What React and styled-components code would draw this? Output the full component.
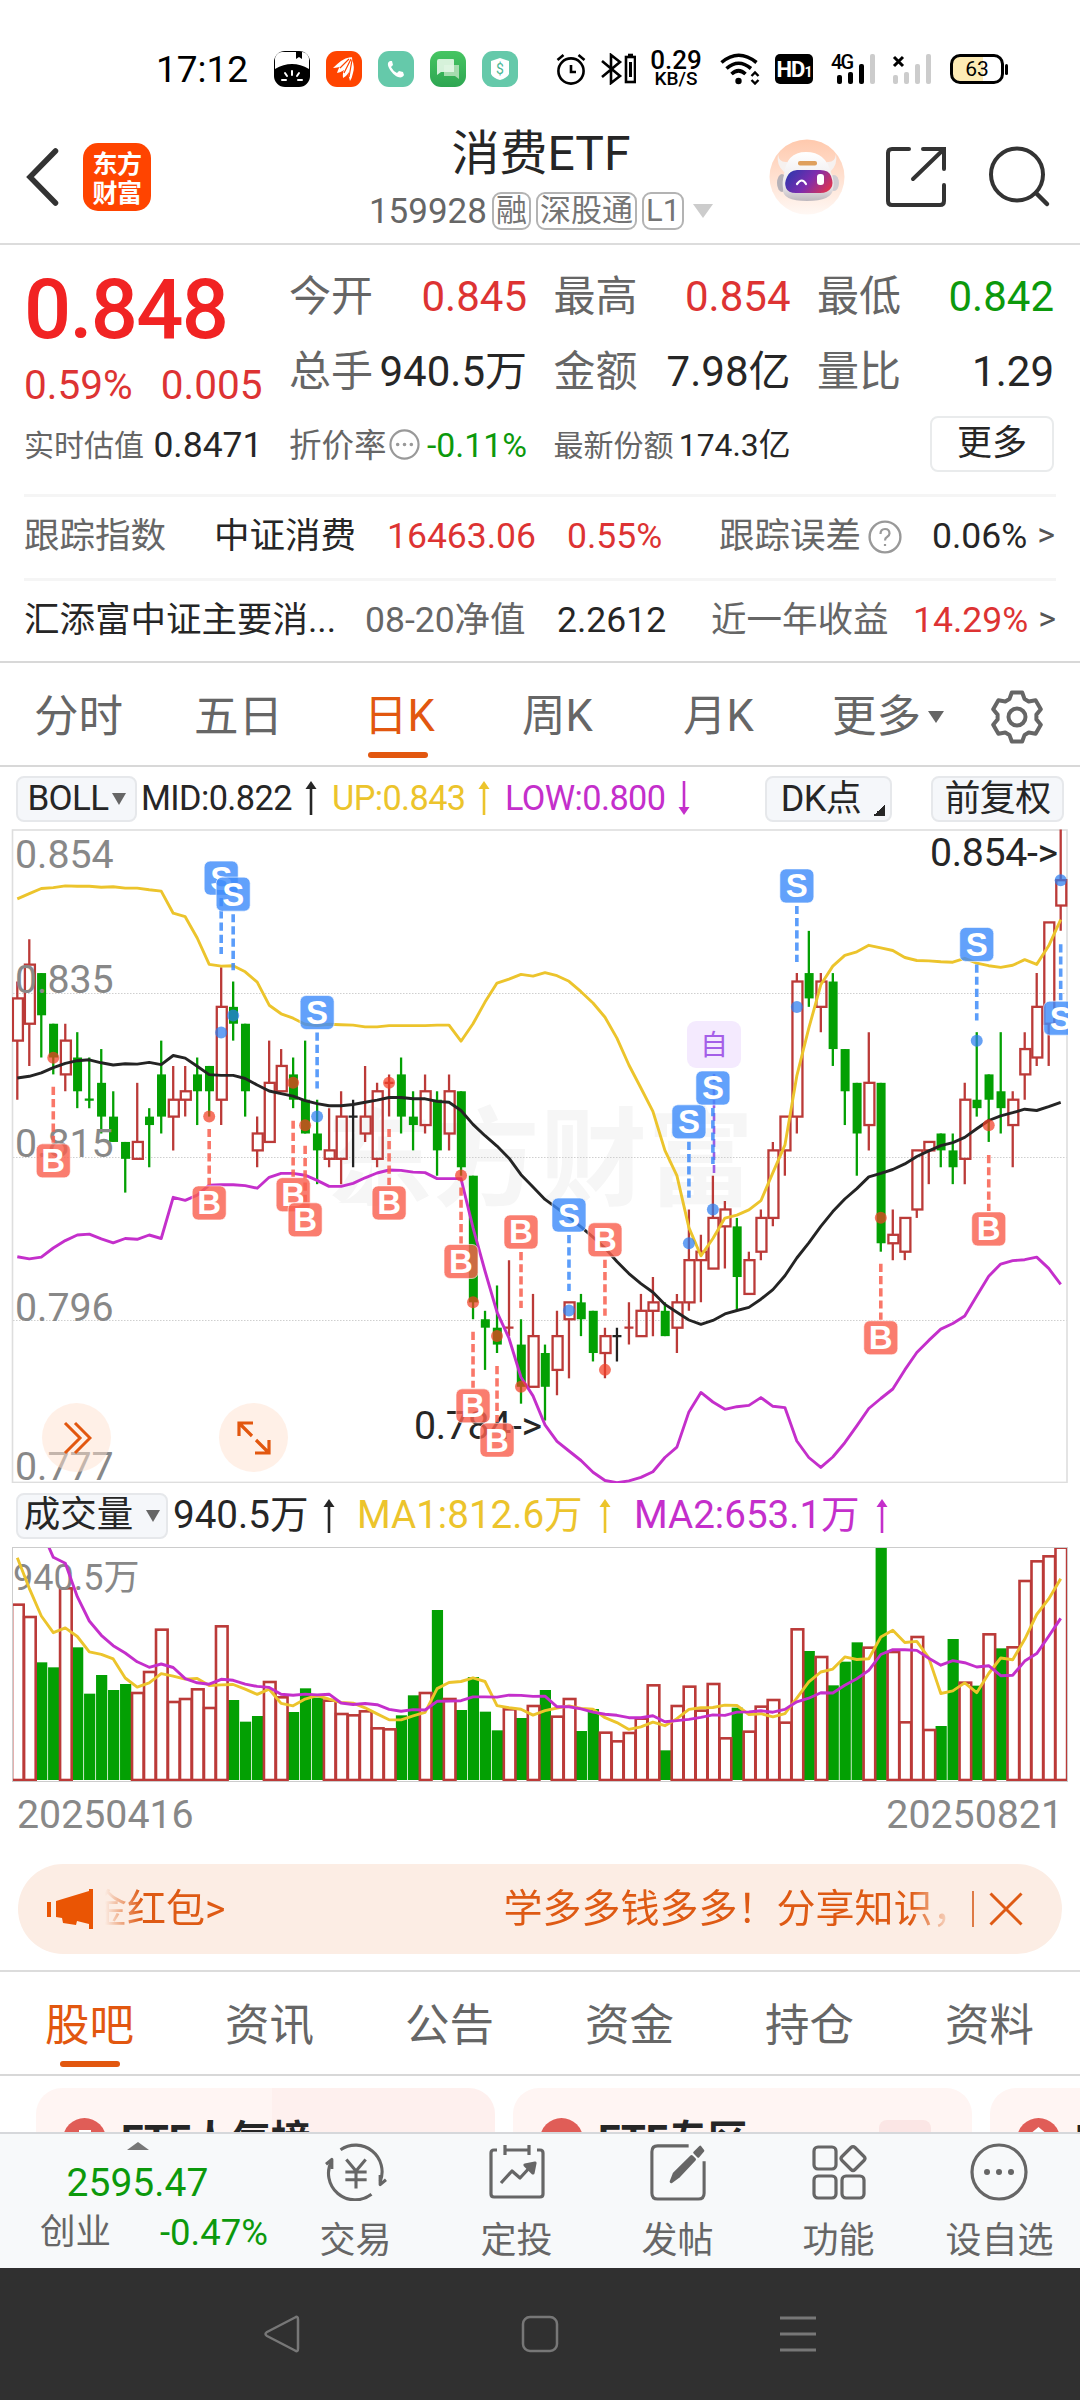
import React from "react";
import styled, { createGlobalStyle, css } from "styled-components";

const RED = "#dd3333";
const GREEN = "#0c990c";
const DARK = "#262626";
const GREY = "#666666";
const ORANGE = "#e2570f";
const YELLOW = "#ecc42c";
const PURPLE = "#c42fcb";
const UP = "#bb3a38";
const DOWN = "#03a003";

const Global = createGlobalStyle`
  * { box-sizing: border-box; }
  body { margin: 0; background: #fff; }
  svg { display: block; flex: none; }
`;

const Screen = styled.div`
  width: 1080px;
  height: 2400px;
  overflow: hidden;
  display: flex;
  flex-direction: column;
  background: #fff;
  color: ${DARK};
  font-family: Roboto, "Noto Sans CJK SC", sans-serif;
  font-size: 36px;
  line-height: 1;
  white-space: nowrap;
`;

const Text = styled.span`
  font-size: ${(p) => p.$size || 36}px;
  color: ${(p) => p.$color || "inherit"};
  line-height: 1;
`;

/* ---------- status bar ---------- */

const StatusBar = styled.div`
  height: 104px;
  padding: 34px 0 0 156px;
  display: flex;
  align-items: center;
  color: #000;
`;

const Clock = styled.span`
  font-size: 37px;
  width: 118px;
`;

const AppIcons = styled.div`
  display: flex;
  gap: 16px;
  width: 298px;
`;

const AppIcon = styled.div`
  width: 36px;
  height: 36px;
  border-radius: 11px;
  overflow: hidden;
  background: ${(p) => p.$bg};
`;

const StatusIcons = styled.div`
  display: flex;
  align-items: center;
  margin-left: -16px;
`;

const Speed = styled.div`
  width: 58px;
  margin: 0 15px 0 11px;
  display: flex;
  flex-direction: column;
  align-items: center;
  font-size: 26px;
  line-height: 19px;
  font-weight: 500;
  small {
    font-size: 19px;
    line-height: 18px;
  }
`;

const HdBadge = styled.div`
  width: 38px;
  height: 30px;
  margin: 0 18px 0 14px;
  border-radius: 5px;
  background: #000;
  color: #fff;
  display: flex;
  align-items: baseline;
  justify-content: center;
  font-size: 22px;
  line-height: 31px;
  font-weight: 700;
  letter-spacing: -1px;
  small { font-size: 14px; }
`;

const Battery = styled.div`
  width: 54px;
  height: 30px;
  margin-left: 18px;
  border: 3px solid #000;
  border-radius: 10px;
  background: linear-gradient(90deg, #fdebb5 62%, #fff 62%);
  font-size: 21px;
  line-height: 25px;
  text-align: center;
`;

const BatteryTip = styled.div`
  width: 3px;
  height: 11px;
  margin-left: 1px;
  border-radius: 2px;
  background: #000;
`;

/* ---------- title bar ---------- */

const TitleBar = styled.header`
  height: 141px;
  padding: 6px 0 0 26px;
  border-bottom: 2px solid #dcdcdc;
  display: flex;
  align-items: center;
`;

const Logo = styled.div`
  width: 68px;
  height: 68px;
  margin-left: 23px;
  border-radius: 15px;
  background: #ff4400;
  color: #fff;
  display: grid;
  place-content: center;
  font: 700 25px/29px "Noto Sans CJK SC", sans-serif;
  letter-spacing: -0.5px;
  text-align: center;
`;

const TitleBlock = styled.div`
  width: 400px;
  margin: 9px 0 0 190px;
  display: flex;
  flex-direction: column;
  align-items: center;
`;

const Title = styled.h1`
  margin: 0;
  font-size: 48px;
  font-weight: 400;
  line-height: 60px;
`;

const SubTitle = styled.div`
  height: 55px;
  display: flex;
  align-items: center;
  gap: 5px;
  color: ${GREY};
`;

const Tag = styled.span`
  height: 38px;
  padding: 0 2px;
  border: 2px solid #b3b3b3;
  border-radius: 9px;
  color: #757575;
  font-size: 31px;
  line-height: 34px;
`;

const Triangle = styled.i`
  width: 0;
  height: 0;
  margin-left: ${(p) => p.$ml || 0}px;
  border: ${(p) => p.$w}px solid transparent;
  border-bottom-width: 0;
  border-top: ${(p) => p.$h}px solid ${(p) => p.$color};
  ${(p) => p.$up && css`transform: rotate(180deg);`}
`;

const HeaderIcons = styled.div`
  display: flex;
  align-items: center;
  gap: 38px;
  margin-left: 28px;
`;

/* ---------- quote panel ---------- */

const Quote = styled.section`
  height: 418px;
  padding: 14px 24px 0;
  border-bottom: 2px solid #d8d8d8;
`;

const QuoteTop = styled.div`
  display: grid;
  grid-template-columns: 238.5px 238px 237px 237px;
  column-gap: 26.5px;
  grid-template-rows: 75px 75px 74px;
  height: 235px;
`;

const PriceBlock = styled.div`
  grid-row: span 2;
  padding-top: 8px;
`;

const Price = styled.div`
  font-size: 83px;
  font-weight: 500;
  line-height: 86px;
  letter-spacing: -1.7px;
  color: #f12323;
`;

const Change = styled.div`
  display: flex;
  justify-content: space-between;
  height: 64px;
  align-items: center;
  font-size: 40.5px;
  color: ${RED};
`;

const Cell = styled.div`
  display: flex;
  align-items: center;
  justify-content: space-between;
  font-size: ${(p) => p.$size || 42}px;
  color: ${(p) => p.$color || DARK};
`;

const MoreButton = styled.button`
  justify-self: end;
  align-self: center;
  width: 124px;
  height: 56px;
  margin: -4px 0 0;
  padding: 0;
  border: 2px solid #e9ebec;
  border-radius: 8px;
  background: #fff;
  color: ${DARK};
  font: 35px/52px Roboto, "Noto Sans CJK SC", sans-serif;
`;

const QuoteRow = styled.div`
  height: 84px;
  border-top: 3px solid #f5f5f5;
  display: grid;
  grid-template-columns: ${(p) => p.$cols};
  align-items: center;
  font-size: 35.5px;
  padding-bottom: 2px;
`;

const Inline = styled.span`
  display: flex;
  align-items: center;
  gap: ${(p) => p.$gap || 0}px;
`;

const Raised = styled.span`
  padding-bottom: 4px;
`;

/* ---------- tabs ---------- */

const Tabs = styled.nav`
  height: 104px;
  border-bottom: 2px solid #d8d8d8;
  border-top: ${(p) => p.$line || 0}px solid #dcdcdc;
  flex: none;
  display: grid;
  grid-template-columns: ${(p) => p.$cols};
  padding-left: ${(p) => p.$pl}px;
`;

const Tab = styled.div`
  position: relative;
  height: 100%;
  display: flex;
  align-items: center;
  padding-top: 6px;
  font-size: ${(p) => p.$size || 44.5}px;
  color: ${(p) => (p.$active ? ORANGE : GREY)};
  ${(p) =>
    p.$active &&
    css`
      &::after {
        content: "";
        position: absolute;
        left: ${p.$bar}px;
        bottom: 7px;
        width: 60px;
        height: 6px;
        border-radius: 3px;
        background: ${ORANGE};
      }
    `}
`;

/* ---------- chart legend rows ---------- */

const Legend = styled.div`
  height: ${(p) => p.$h}px;
  padding: 1px 16px 0;
  display: flex;
  align-items: center;
  font-size: ${(p) => p.$size}px;
  letter-spacing: ${(p) => p.$track || 0}px;
`;

const Chip = styled.div`
  width: ${(p) => p.$w}px;
  height: 46px;
  margin-right: ${(p) => p.$mr || 0}px;
  margin-left: ${(p) => (p.$push ? "auto" : 0)};
  border: 2px solid #e6e8eb;
  border-radius: 8px;
  background: #f5f7fa;
  display: flex;
  align-items: center;
  justify-content: center;
  font-size: ${(p) => p.$size || 36}px;
`;

const Corner = styled.i`
  width: 12px;
  height: 12px;
  margin: 22px -9px 0 12px;
  background: linear-gradient(135deg, transparent 50%, ${DARK} 50%);
`;

const Reading = styled.div`
  width: ${(p) => p.$w}px;
  display: flex;
  align-items: center;
  justify-content: space-between;
  color: ${(p) => p.$color};
  margin-right: ${(p) => p.$mr || 0}px;
`;

const ChartBox = styled.div`
  position: relative;
  height: ${(p) => p.$h}px;
`;

const RoundButton = styled.div`
  position: absolute;
  left: ${(p) => p.$x}px;
  top: 574px;
  width: 69px;
  height: 69px;
  border-radius: 50%;
  background: rgba(255, 225, 208, 0.5);
  display: grid;
  place-items: center;
`;

const Dates = styled.div`
  height: 82px;
  padding: 0 17px 15px 17px;
  display: flex;
  align-items: center;
  justify-content: space-between;
  color: #888;
  font-size: 39.3px;
`;

/* ---------- notice ---------- */

const Notice = styled.div`
  height: 90px;
  margin: 0 18px 16px;
  padding: 0 36px 0 29px;
  border-radius: 45px;
  background: #fcede4;
  color: #de5a14;
  display: flex;
  align-items: center;
`;

const Marquee = styled.div`
  width: 854px;
  height: 60px;
  margin-left: 12px;
  overflow: hidden;
  display: flex;
  align-items: center;
  font-size: 39px;
  flex: none;
  mask-image: linear-gradient(90deg, transparent, #000 36px, #000 806px, transparent 850px);
`;

const MarqueeItem = styled.span`
  margin-left: ${(p) => p.$ml}px;
`;

const NoticeRule = styled.i`
  width: 2px;
  height: 36px;
  margin: 0 15px 0 13px;
  background: #de7a45;
  flex: none;
`;

/* ---------- cards ---------- */

const Cards = styled.div`
  height: 56px;
  overflow: hidden;
  padding: 12px 0 0 36px;
  display: flex;
  gap: 18px;
`;

const Card = styled.div`
  flex: none;
  width: 459px;
  height: 120px;
  border-radius: 26px;
  padding: 30px 0 0 27px;
  background: ${(p) => p.$bg || "#fff5f3"};
  display: flex;
  align-items: flex-start;
  overflow: hidden;
`;

const CardTitle = styled.span`
  margin-left: 15px;
  font-size: 40px;
  font-weight: 700;
  line-height: 46px;
`;

const CardArrow = styled.span`
  margin-left: 14px;
  color: #888;
  font-size: 26px;
  line-height: 44px;
`;

const CardBlock = styled.i`
  width: 52px;
  height: 50px;
  margin: 2px 0 0 104px;
  border-radius: 8px;
  background: #fbe6e5;
`;

/* ---------- bottom bars ---------- */

const Toolbar = styled.footer`
  height: 136px;
  border-top: 2px solid #d6d8db;
  background: #f7f9fa;
  display: grid;
  grid-template-columns: 275px repeat(5, 161px);
`;

const IndexBox = styled.div`
  display: flex;
  flex-direction: column;
  align-items: center;
  padding-top: 8px;
  color: ${GREEN};
`;

const IndexValue = styled.div`
  margin: 14px 0 6px;
  font-size: 39px;
  line-height: 39px;
`;

const IndexLine = styled.div`
  width: 228px;
  height: 48px;
  margin-left: 33px;
  display: flex;
  align-items: center;
  justify-content: space-between;
  font-size: 36.5px;
`;

const ToolItem = styled.div`
  display: flex;
  flex-direction: column;
  align-items: center;
  padding-top: 9px;
  color: ${GREY};
  font-size: 36px;
  line-height: 42px;
  gap: 19px;
`;

const SystemNav = styled.div`
  height: 132px;
  background: #303030;
  display: flex;
  justify-content: space-between;
  align-items: center;
  padding: 0 263px;
`;

/* ---------- data ---------- */

/* Distance below 0.854 in thousandths: [kind, high, top, bottom, low] */
const CANDLES = `r18,20,25,32 r13,16,23,28 g17,17,22,27 g23,23,27,29 r23,25,29,31 g24,27,31,33 g27,32,32,33
g26,30,34,36 g31,34,37,37 g37,37,39,43 r30,37,39,39 g33,34,35,40 g25,29,34,36 r28,32,34,38 r28,31,32,34
g27,29,31,35 g28,28,31,34 r16.3,21,32,35 g18,21,23,25 g23,23,31,34 r34,36,38,40 r25,30,37,37 r26,28,31,31
g27,29,32,33 g25,32,36,36 g32,36,38,42 r33,38,39,40 r31,34,39,42 k32,34,34,40 r28,34,36,37 r30,31,39,40
r29,30,30,34 g27,29,34,36 g31,34,35,38 r29,31,35,36 g31,32,38,41 r29,31,36,38 g31,31,40,41 g41,41,56,58
g57,58,59,64 g54,59,61,62 r51,59,59,60 g58,61,66,68 r55,60,66,66 g61,62,66,70 r57,60,64,67 r56,56,58,65
g55,56,58,60 g57,57,62,63 r59,60,62,65 k59,60,60,63 r56,59,59,61 r55,57,60,60 r53,56,57,60 g56,57,60,60
r55,56,59,62 r45,51,56,57 r48,50,51,56 r41,46,52,52 r44,45,47,52 g46,47,53,57 r50,51,55,55 r45,46,50,51
r37,38,46,47 r34,34,38,41 r17,18,34,36 g12,17,20,21 r17,18,21,24 g17,18,26,28 g26,26,31,35 g30,30,36,41
r24,30,35,38 g30,30,49,50 r45,48,49,51 r46,46,50,51 r38,38,45,46 r37,37,38,42 g36,36,38,40 g36,38,40,42
r30,32,39,42 g24,32,33,34 g29,29,32,37 g24,31,33,36 r31,32,35,40 r24,26,29,32 r17,21,27,28 r11,11,23,28
r0,6,9,12`
  .split(/\s+/)
  .map((s) => ({ kind: s[0], v: s.slice(1).split(",").map(Number) }));

const BOLL_UP = [
  182, 170, 158, 156, 152, 153, 153, 155, 154, 157, 157, 161, 164, 215, 223, 272, 333, 337, 336, 350, 374, 427,
  447, 457, 471, 474, 471, 472, 473, 477, 477, 474, 474, 474, 474, 473, 473, 510, 470, 420, 376, 367, 356, 360,
  352, 359, 372, 396, 422, 455, 503, 565, 618, 672, 762, 820, 940, 1005, 965, 918, 911, 899, 878, 813, 750, 590,
  480, 380, 337, 312, 304, 289, 295, 301, 317, 324, 325, 327, 328, 319, 330, 336, 340, 335, 322, 333, 290, 230,
];
const BOLL_MID = [
  595, 591, 583, 571, 561, 555, 553, 560, 565, 562, 563, 559, 564, 543, 549, 568, 587, 589, 589, 596, 611, 625,
  631, 637, 647, 654, 659, 659, 656, 651, 646, 640, 640, 643, 643, 649, 651, 670, 702, 728, 752, 780, 818, 846,
  875, 895, 916, 938, 962, 987, 1018, 1046, 1069, 1089, 1117, 1135, 1153, 1163, 1154, 1139, 1131, 1124, 1105,
  1083, 1051, 1010, 975, 937, 903, 874, 850, 823, 815, 806, 793, 776, 763, 751, 744, 732, 712, 693, 682, 675,
  667, 670, 661, 651,
];
const BOLL_LOW = [
  1007, 1012, 1008, 987, 970, 957, 955, 966, 975, 965, 967, 957, 965, 870, 877, 865, 842, 841, 841, 843, 849, 824,
  815, 815, 819, 831, 845, 845, 838, 825, 814, 807, 808, 812, 813, 827, 827, 827, 940, 1040, 1135, 1195, 1285,
  1328, 1395, 1433, 1455, 1477, 1504, 1523, 1528, 1524, 1516, 1503, 1470, 1446, 1365, 1320, 1342, 1359, 1353,
  1350, 1332, 1352, 1355, 1432, 1470, 1493, 1469, 1436, 1397, 1357, 1334, 1312, 1268, 1228, 1200, 1174, 1161,
  1144, 1098, 1052, 1024, 1016, 1014, 1008, 1034, 1071,
];

/* [candle index, letter, badge position, dot position, badge side] */
const MARKS = [
  [3, "B", 786, 548, "below"],
  [16, "B", 883, 684, "below"],
  [17, "S", 134, 490, "above"],
  [18, "S", 171, 451, "above"],
  [23, "B", 864, 606, "below"],
  [24, "B", 922, 704, "below"],
  [25, "S", 444, 684, "above"],
  [31, "B", 883, 606, "below"],
  [37, "B", 1018, 820, "below"],
  [38, "B", 1351, 1112, "below"],
  [40, "B", 1430, 1190, "below"],
  [42, "B", 950, 1307, "above"],
  [46, "S", 911, 1131, "above"],
  [49, "B", 968, 1268, "above"],
  [56, "S", 696, 976, "above"],
  [58, "S", 618, 898, "above"],
  [65, "S", 152, 431, "above"],
  [72, "B", 1194, 917, "below"],
  [80, "S", 287, 509, "above"],
  [81, "B", 943, 704, "below"],
  [87, "S", 457, 139, "below"],
];

const VOLUMES = [
  526, 489, 353, 338, 575, 398, 259, 315, 270, 288, 261, 324, 451, 234, 243, 272, 216, 461, 240, 175, 192, 294,
  248, 204, 275, 247, 238, 198, 194, 206, 155, 152, 194, 254, 261, 510, 243, 210, 309, 205, 149, 212, 186, 222,
  270, 190, 243, 147, 213, 142, 116, 141, 184, 284, 89, 222, 280, 208, 288, 125, 217, 145, 220, 240, 172, 452,
  387, 369, 284, 355, 413, 397, 696, 384, 173, 429, 150, 162, 423, 292, 283, 437, 395, 398, 597, 656, 671, 697,
];

const VOLUME_DOWN = new Set([
  2, 3, 5, 6, 7, 8, 9, 18, 19, 20, 23, 24, 25, 32, 33, 35, 37, 38, 39, 40, 42, 44, 47, 48, 54, 60, 66, 68, 69, 70,
  72, 77, 78, 80, 82,
]);

const STEP = 11.993;
const px = (i) => 17.3 + i * STEP;
const scaleY = (v) => v / 2.306 - 9;
const priceY = (d) => scaleY(22 + d * 19.47);
const volY = (v) => (900 - v) / 3 - 67;
const curveY = (v) => volY(v);
const line = (values, y) => values.map((v, i) => `${px(i).toFixed(1)},${y(v).toFixed(1)}`).join(" ");

const average = (span, lead) =>
  VOLUMES.map((_, i) =>
    i < span - 1 ? lead[i] : VOLUMES.slice(i - span + 1, i + 1).reduce((a, b) => a + b, 0) / span
  );
const MA1 = average(5, [667, 575, 492, 442]);
const MA2 = average(10, [900, 830, 750, 668, 650, 550, 477, 434, 403]);

/* ---------- drawings ---------- */

const Candle = ({ i, kind, v }) => {
  const [high, top, bottom, low] = v.map(priceY);
  const x = px(i);
  if (kind === "k" || bottom === top) {
    const color = kind === "k" ? "#222" : kind === "r" ? UP : DOWN;
    return <path d={`M${x} ${high}V${low}M${x - 4.5} ${top}H${x + 4.5}`} stroke={color} strokeWidth="2.3" />;
  }
  if (kind === "g")
    return (
      <g>
        <path d={`M${x} ${high}V${low}`} stroke={DOWN} strokeWidth="2.3" />
        <rect x={x - 4.2} y={top} width="9" height={bottom - top} fill={DOWN} />
      </g>
    );
  return (
    <g stroke={UP} strokeWidth="2.3" fill="none">
      <path d={`M${x} ${high}V${top}M${x} ${bottom}V${low}`} />
      <rect x={x - 4.4} y={top} width="10" height={bottom - top} />
    </g>
  );
};

const Mark = ({ i, letter, badge, dot, side }) => {
  const x = px(i);
  const y = scaleY(badge);
  const color = letter === "S" ? "#3f8cfa" : "#f9604f";
  const start = side === "above" ? y + 20 : y - 74;
  return (
    <g>
      <path d={`M${x} ${start}V${start + 56}`} stroke={color} strokeWidth="3.6" strokeDasharray="8.2 4" opacity="0.85" />
      <circle cx={x} cy={scaleY(dot)} r="6" fill={letter === "S" ? "#2b7df0" : "#f23f26"} opacity="0.72" />
      <rect x={x - 17} y={y - 17} width="34" height="34" rx="6" fill={color} fillOpacity="0.82" stroke="#fff" strokeOpacity="0.6" />
      <text x={x} y={y + 11.5} textAnchor="middle" fill="#fff" fontFamily="Liberation Sans, sans-serif" fontWeight="700" fontSize="33">
        {letter}
      </text>
    </g>
  );
};

const AXIS = [
  ["0.854", 38.5],
  ["0.835", 164],
  ["0.815", 327.5],
  ["0.796", 491.5],
  ["0.777", 651],
];

const PriceChart = () => (
  <svg width="1080" height="654" fontFamily="Roboto, 'Noto Sans CJK SC', sans-serif" fontSize="39.3">
    <defs>
      <clipPath id="plot">
        <rect x="12" y="0" width="1056" height="654" />
      </clipPath>
    </defs>
    <path d="M338 374Q366 366 372 334V374Z" fill="#f6f6f6" />
    <text x="326" y="368" fontSize="107" fontWeight="700" fill="#f6f6f6">东方财富</text>
    {[400, 777, 1154].map((v) => (
      <path key={v} d={`M13 ${Math.round(scaleY(v)) + 0.5}H1067`} stroke="#cfcfcf" strokeDasharray="1.5 1.5" />
    ))}
    <rect x="12.5" y="1" width="1054.5" height="652.4" fill="none" stroke="#dedede" strokeWidth="1.6" />
    <g clipPath="url(#plot)">
      {CANDLES.map((c, i) => (
        <Candle key={i} i={i} {...c} />
      ))}
      {AXIS.map(([t, y]) => (
        <text key={t} x="15" y={y} fill="#888">{t}</text>
      ))}
      <text x="930" y="36.5" fill={DARK} textLength="128">0.854-&gt;</text>
      <text x="414" y="609.5" fill={DARK} textLength="128">0.784-&gt;</text>
      <g fill="none" strokeWidth="2.9" strokeLinejoin="round">
        <polyline points={line(BOLL_UP, scaleY)} stroke={YELLOW} />
        <polyline points={line(BOLL_LOW, scaleY)} stroke={PURPLE} />
        <polyline points={line(BOLL_MID, scaleY)} stroke="#242424" />
      </g>
      <path d="M714 245V347" stroke="#9b5de5" strokeWidth="2.6" strokeDasharray="8 5" />
      <rect x="687" y="192" width="54" height="47" rx="9" fill="#f4eafe" />
      <text x="714" y="226" textAnchor="middle" fill="#a45fe8" fontSize="28">自</text>
      {MARKS.map(([i, letter, badge, dot, side]) => (
        <Mark key={i} i={i} letter={letter} badge={badge} dot={dot} side={side} />
      ))}
    </g>
  </svg>
);

const VolumeChart = () => (
  <svg width="1080" height="235" fontFamily="Roboto, 'Noto Sans CJK SC', sans-serif" fontSize="36">
    <defs>
      <clipPath id="volume">
        <rect x="12" y="0" width="1056" height="235" />
      </clipPath>
    </defs>
    <g clipPath="url(#volume)">
      {VOLUMES.map((v, i) =>
        VOLUME_DOWN.has(i) ? (
          <rect key={i} x={px(i) - 5.2} y={volY(v)} width="11.2" height={v / 3} fill={DOWN} />
        ) : null
      )}
      {VOLUMES.map((v, i) =>
        VOLUME_DOWN.has(i) ? null : (
          <rect key={i} x={px(i) - 5.2} y={volY(v)} width="11.6" height={v / 3} fill="#fff" stroke={UP} strokeWidth="2.6" />
        )
      )}
      <text x="13" y="42.5" fill="#888">940.5万</text>
      <g fill="none" strokeWidth="2.9" strokeLinejoin="round">
        <polyline points={line(MA1, curveY)} stroke={YELLOW} />
        <polyline points={line(MA2, curveY)} stroke={PURPLE} />
      </g>
    </g>
    <rect x="12.5" y="0.5" width="1055" height="234" fill="none" stroke="#cccccc" />
  </svg>
);

const Arrow = ({ color, down }) => (
  <svg width="12" height="34" viewBox="0 0 12 34" transform={down ? "rotate(180)" : undefined}>
    <path d="M6 5V34" stroke={color} strokeWidth="2.6" />
    <path d="M0.5 8L6 0l5.5 8z" fill={color} />
  </svg>
);

const gearPath = () => {
  const pts = [];
  for (let k = 0; k < 6; k++) {
    [[-23, 19.5], [-12, 25], [12, 25], [23, 19.5]].forEach(([off, r]) => {
      const a = ((k * 60 - 90 + off) * Math.PI) / 180;
      pts.push(`${(27 + r * Math.cos(a)).toFixed(1)} ${(27 + r * Math.sin(a)).toFixed(1)}`);
    });
  }
  return `M${pts.join("L")}Z`;
};

const Gear = () => (
  <svg width="54" height="54" fill="none" stroke={GREY} strokeWidth="4" strokeLinejoin="round">
    <path d={gearPath()} />
    <circle cx="27" cy="27" r="8.5" />
  </svg>
);

const HelpDot = ({ size, children }) => (
  <svg width={size} height={size} viewBox="0 0 34 34" fill="none" stroke="#999" strokeWidth="2.4">
    <circle cx="17" cy="17" r="15.4" />
    {children}
  </svg>
);

const Robot = () => (
  <svg width="76" height="76" viewBox="0 0 76 76">
    <defs>
      <linearGradient id="halo" x1="0" y1="0" x2="0" y2="1">
        <stop offset="0" stopColor="#ffc9ad" />
        <stop offset="1" stopColor="#fff8f4" />
      </linearGradient>
      <linearGradient id="visor" x1="0" y1="0.3" x2="1" y2="0.7">
        <stop offset="0" stopColor="#3436ad" />
        <stop offset="0.5" stopColor="#7d2cae" />
        <stop offset="1" stopColor="#dd3450" />
      </linearGradient>
      <linearGradient id="shell" x1="0" y1="0" x2="0" y2="1">
        <stop offset="0" stopColor="#ffffff" />
        <stop offset="0.7" stopColor="#ebe8ea" />
        <stop offset="1" stopColor="#bdb7bd" />
      </linearGradient>
    </defs>
    <circle cx="38" cy="38" r="37.5" fill="url(#halo)" />
    <path d="M9 15q1 9 9 8l5 6-8 4q-8-7-6-18zM67 15q-1 9-9 8l-5 6 8 4q8-7 6-18z" fill="#f6f1ef" />
    <ellipse cx="13" cy="44" rx="5" ry="9" fill="#b5b1b8" />
    <ellipse cx="65" cy="44" rx="5" ry="8" fill="#d0ccd2" />
    <path d="M15 36Q17 13 37 13t25 21q4 8 2 16-1 12-26 12T14 50q-1-8 1-14z" fill="url(#shell)" />
    <rect x="29" y="22" width="19" height="4.5" rx="2" fill="#dfa05d" />
    <path d="M18 38q2-6 10-7h23q9 0 11 6 3 8 0 12-3 5-11 5H27q-8 0-10-5-2-5 1-11z" fill="url(#visor)" />
    <path d="M28 45q5-7 9 0" stroke="#fff" strokeWidth="2.2" fill="none" strokeLinecap="round" />
    <rect x="48" y="35" width="7" height="11" rx="3" fill="#fff" />
  </svg>
);

const Wifi = () => (
  <svg width="41" height="32" viewBox="0 0 41 32" fill="none" stroke="#000" strokeWidth="3.6">
    <path d="M1.5 9.5Q18.5-5 36.5 9.5M6.5 15.5Q18.5 5 31 15.5M11.5 21Q18.5 14.5 25.5 21" />
    <circle cx="18.5" cy="28" r="3.2" fill="#000" stroke="none" />
    <path d="M31.5 23L35 19.5 38.5 23M31.5 27L35 30.5 38.5 27" strokeWidth="2.4" />
  </svg>
);

const SignalBox = styled.div`
  display: flex;
  margin-right: ${(p) => p.$mr || 0}px;
`;

const Signal = ({ label, levels, dim }) => (
  <svg width={label ? 46 : 40} height="32" viewBox={label ? "0 0 46 32" : "0 0 40 32"} overflow="visible">
    {label && (
      <text x="0" y="16" fontSize="20" fontWeight="500" fontFamily="Roboto, sans-serif" textLength="23">
        {label}
      </text>
    )}
    {dim && <path d="M2 4l9 9M11 4l-9 9" stroke="#000" strokeWidth="3" />}
    {levels.map(([x, h, c]) => (
      <rect key={x} x={x} y={31 - h} width="5" height={h} rx="2" fill={c} />
    ))}
  </svg>
);

const toolIcon = { width: 60, height: 58, fill: "none", stroke: GREY, strokeWidth: 3.2, strokeLinejoin: "round" };

const TOOLS = [
  [
    "交易",
    <svg key="t" {...toolIcon} width="66" viewBox="0 0 66 60">
      <path d="M17 7A27.5 27.5 0 0 1 58 40M49 53A27.5 27.5 0 0 1 8 18" />
      <path d="M2 22l6-5v10M64 38l-6 5v-10" />
      <path d="M23 17l10 12 10-12M33 29v18M22 30h22M22 38h22" />
    </svg>,
  ],
  [
    "定投",
    <svg key="t" {...toolIcon} viewBox="0 0 60 58">
      <path d="M10 7H7q-3 0-3 3v41q0 3 3 3h46q3 0 3-3V10q0-3-3-3h-3M18 7h24M18 2v10M42 2v10" />
      <path d="M14 40l11-12 8 7 12-13" />
      <path d="M38 22l10-2-2 10z" fill={GREY} />
    </svg>,
  ],
  [
    "发帖",
    <svg key="t" {...toolIcon} viewBox="0 0 60 60">
      <path d="M41 3H9q-6 0-6 6v43q0 6 6 6h42q6 0 6-6V19" />
      <path d="M53 4l3 4-5 6-4-4z" fill={GREY} strokeWidth="2.5" />
      <path d="M44 14l3 3-17 18-7 5 3-8z" fill={GREY} />
    </svg>,
  ],
  [
    "功能",
    <svg key="t" {...toolIcon} viewBox="0 0 60 58">
      <rect x="5" y="4" width="22" height="22" rx="4" />
      <rect x="5" y="33" width="22" height="22" rx="4" />
      <rect x="33" y="33" width="22" height="22" rx="4" />
      <path d="M42 4.500q2-2 4 0l9 9q2 2 0 4l-9 9q-2 2-4 0l-9-9q-2-2 0-4z" />
    </svg>,
  ],
  [
    "设自选",
    <svg key="t" {...toolIcon} viewBox="0 0 60 58">
      <circle cx="29" cy="29" r="27" />
      <path d="M17 29h.01M29 29h.01M41 29h.01" strokeWidth="6" strokeLinecap="round" />
    </svg>,
  ],
];

const CardIcon = ({ children }) => (
  <svg width="43" height="43" viewBox="0 0 43 43">
    <circle cx="21.500" cy="21.500" r="21.500" fill="#e05d57" />
    {children}
  </svg>
);

export default function App() {
  return (
    <Screen>
      <Global />

      <StatusBar>
        <Clock>17:12</Clock>
        <AppIcons>
          <AppIcon $bg="#000">
            <svg width="36" height="36">
              <path d="M1 18V8q0-7 7-7h14v7l3-2 3 2V1q7 0 7 7v10Q18 8 1 18z" fill="#fff" />
              <path d="M18 20v4M11 22l2 3M25 22l-2 3M8 29h4M24 29h4" stroke="#fff" strokeWidth="2" strokeLinecap="round" />
            </svg>
          </AppIcon>
          <AppIcon $bg="#ff4400">
            <svg width="36" height="36" fill="#fff">
              <path d="M7 17Q11 13 15 10 19 7 25 6q-4 5-8 8-4 3-10 3zM11 22q2-7 7-11 3-3 8-5-1 6-5 10-4 5-10 6zM17 27q-1-6 3-12 2-5 6-9 1 7-2 13-2 5-7 8zM24 30q-2-5-1-10 1-7 3-12 3 8 1 14-1 5-3 8z" />
              <path d="M14 17l9-9M18 22l7-14M23 26l3-17" stroke="#ff4400" strokeWidth="1.200" />
            </svg>
          </AppIcon>
          <AppIcon $bg="#65c9aa">
            <svg width="36" height="36" fill="#fff">
              <path d="M12 10c-2 1-3 3-1 7s6 8 9 9 5 0 6-2l-1-3-4-1-2 2q-4-2-6-6l2-2-1-4z" />
            </svg>
          </AppIcon>
          <AppIcon $bg="linear-gradient(#46c562, #2ea652)">
            <svg width="36" height="36">
              <path d="M14 14h15v14l-4-3H14z" fill="#a5dcae" />
              <path d="M9 8h14q1 0 1 1v12H11l-4 3V10q0-2 2-2z" fill="#e3f6e5" fillOpacity="0.92" />
            </svg>
          </AppIcon>
          <AppIcon $bg="#65c9aa">
            <svg width="36" height="36">
              <path d="M18 7l9 3v13q-2 4-9 6-7-2-9-6V10z" fill="#fff" />
              <text x="18" y="23" textAnchor="middle" fontSize="14" fontFamily="Roboto, sans-serif" fill="#4cb894">$</text>
            </svg>
          </AppIcon>
        </AppIcons>
        <StatusIcons>
          <svg width="30" height="32" fill="none" stroke="#000" strokeWidth="2.600">
            <circle cx="15" cy="18" r="12.600" />
            <path d="M15 12v7h5M1.500 7l6-5M28.500 7l-6-5" />
          </svg>
          <svg width="50" height="32" viewBox="-14 0 50 32" fill="none" stroke="#000" strokeWidth="2.600">
            <path d="M2 8l18 15-9 7V2l9 7L2 24" />
            <rect x="26" y="4" width="9" height="25" />
            <path d="M30.500 9v15" strokeWidth="3" />
            <path d="M28 2h5" />
          </svg>
          <Speed>
            0.29<small>KB/S</small>
          </Speed>
          <Wifi />
          <HdBadge>
            HD<small>1</small>
          </HdBadge>
          <SignalBox $mr={15}>
            <Signal label="4G" levels={[[6, 9, "#000"], [17, 12, "#000"], [28, 20, "#000"], [39, 30, "#ccc"]]} />
          </SignalBox>
          <Signal dim levels={[[1, 9, "#ccc"], [12, 12, "#ccc"], [23, 20, "#ccc"], [34, 30, "#ccc"]]} />
          <Battery>63</Battery>
          <BatteryTip />
        </StatusIcons>
      </StatusBar>

      <TitleBar>
        <svg width="34" height="62" viewBox="0 0 34 62" fill="none" stroke="#333" strokeWidth="5.500" strokeLinecap="round">
          <path d="M29.500 5L4 31l25.500 26" />
        </svg>
        <Logo>
          东方
          <br />
          财富
        </Logo>
        <TitleBlock>
          <Title>消费ETF</Title>
          <SubTitle>
            <Text $size={35}>159928</Text>
            <Tag>融</Tag>
            <Tag>深股通</Tag>
            <Tag>L1</Tag>
            <Triangle $ml={4} $w={10.500} $h={14} $color="#ccc" />
          </SubTitle>
        </TitleBlock>
        <HeaderIcons>
          <Robot />
          <svg width="66" height="66" fill="none" stroke="#333" strokeWidth="4" strokeLinecap="round">
            <path d="M26 5H9Q5 5 5 9v48q0 4 4 4h48q4 0 4-4V41M40 5h21v20M60 6L30 35" />
          </svg>
          <svg width="64" height="66" fill="none" stroke="#333" strokeWidth="4" strokeLinecap="round">
            <circle cx="30" cy="30.500" r="26" />
            <path d="M49 49l11 11" strokeWidth="4.500" />
          </svg>
        </HeaderIcons>
      </TitleBar>

      <Quote>
        <QuoteTop>
          <PriceBlock>
            <Price>0.848</Price>
            <Change>
              <span>0.59%</span>
              <span>0.005</span>
            </Change>
          </PriceBlock>
          <Cell $color={RED}><Text $color={GREY} $size={42}>今开</Text>0.845</Cell>
          <Cell $color={RED}><Text $color={GREY} $size={42}>最高</Text>0.854</Cell>
          <Cell $color={GREEN}><Text $color={GREY} $size={42}>最低</Text>0.842</Cell>
          <Cell><Text $color={GREY} $size={42}>总手</Text>940.5万</Cell>
          <Cell><Text $color={GREY} $size={42}>金额</Text>7.98亿</Cell>
          <Cell><Text $color={GREY} $size={42}>量比</Text>1.29</Cell>
          <Cell $size={35.5}><Text $color={GREY} $size={30}>实时估值</Text>0.8471</Cell>
          <Cell $size={33.8} $color={GREEN}>
            <Inline $gap={2}>
              <Text $color={GREY} $size={32.5}>折价率</Text>
              <Raised>
                <HelpDot size={31}>
                  <path d="M9.500 17h.01M17 17h.01M24.500 17h.01" strokeWidth="4" strokeLinecap="round" />
                </HelpDot>
              </Raised>
            </Inline>
            -0.11%
          </Cell>
          <Cell $size={31.8}><Text $color={GREY} $size={30}>最新份额</Text>174.3亿</Cell>
          <MoreButton>更多</MoreButton>
        </QuoteTop>
        <QuoteRow $cols="190px 173px 180px 152px 213px 1fr">
          <Text $color={GREY} $size={35.5}>跟踪指数</Text>
          <span>中证消费</span>
          <Text $color={RED} $size={35.5}>16463.06</Text>
          <Text $color={RED} $size={35.5}>0.55%</Text>
          <Inline $gap={7}>
            <Text $color={GREY} $size={35.5}>跟踪误差</Text>
            <HelpDot size={34}>
              <path d="M12.500 14q0-5 4.500-5t4.500 4.500q0 2-2.500 3.500-2 1-2 3.500M17 24v2" strokeWidth="2.200" />
            </HelpDot>
          </Inline>
          <Inline $gap={10}>0.06% <Raised><Text $color="#555" $size={34}>&gt;</Text></Raised></Inline>
        </QuoteRow>
        <QuoteRow $cols="341px 192px 154px 202px 1fr">
          <span>汇添富中证主要消...</span>
          <Text $color={GREY} $size={35.5}>08-20净值</Text>
          <span>2.2612</span>
          <Text $color={GREY} $size={35.5}>近一年收益</Text>
          <Inline $gap={10}>
            <Text $color={RED} $size={35.5}>14.29%</Text>
            <Raised><Text $color="#555" $size={34}>&gt;</Text></Raised>
          </Inline>
        </QuoteRow>
      </Quote>

      <Tabs $cols="160px 170px 158px 161px 149px 158px 1fr" $pl={34}>
        <Tab>分时</Tab>
        <Tab>五日</Tab>
        <Tab $active $size={43.500} $bar={4}>日K</Tab>
        <Tab $size={43.500}>周K</Tab>
        <Tab $size={43.500}>月K</Tab>
        <Tab>
          更多
          <Triangle $ml={7} $w={8} $h={12} $color={GREY} />
        </Tab>
        <Tab><Gear /></Tab>
      </Tabs>

      <Legend $h={62} $size={34.300} $track={-0.600}>
        <Chip $w={121} $mr={4} $size={35}>
          BOLL
          <Triangle $ml={3} $w={7.500} $h={12} $color={GREY} />
        </Chip>
        <Reading $w={176} $mr={15} $color={DARK}>MID:0.822<Arrow color={DARK} /></Reading>
        <Reading $w={158} $mr={15} $color={YELLOW}>UP:0.843<Arrow color={YELLOW} /></Reading>
        <Reading $w={185} $color={PURPLE}>LOW:0.800<Arrow color={PURPLE} down /></Reading>
        <Chip $w={127} $push $mr={39}>DK点<Corner /></Chip>
        <Chip $w={133}>前复权</Chip>
      </Legend>

      <ChartBox $h={654}>
        <PriceChart />
        <RoundButton $x={42}>
          <svg width="31" height="34" fill="none" stroke={ORANGE} strokeWidth="3">
            <path d="M4 2l15 15L4 32M14 2l15 15-15 15" />
          </svg>
        </RoundButton>
        <RoundButton $x={219}>
          <svg width="36" height="36" fill="none" stroke={ORANGE} strokeWidth="3.200">
            <path d="M3 16V3h14M3 3l13 13M33 20v13H19M33 33L20 20" />
          </svg>
        </RoundButton>
      </ChartBox>

      <Legend $h={64} $size={38.600}>
        <Chip $w={152} $mr={5} $size={36.500}>
          成交量
          <Triangle $ml={13} $w={7.500} $h={12} $color={GREY} />
        </Chip>
        <Reading $w={162} $mr={22} $color={DARK}>940.5万<Arrow color={DARK} /></Reading>
        <Reading $w={254} $mr={23} $color={YELLOW}>MA1:812.6万<Arrow color={YELLOW} /></Reading>
        <Reading $w={254} $color={PURPLE}>MA2:653.1万<Arrow color={PURPLE} /></Reading>
      </Legend>

      <VolumeChart />

      <Dates>
        <span>20250416</span>
        <span>20250821</span>
      </Dates>

      <Notice>
        <svg width="46" height="40" fill="#ea5504">
          <rect x="0" y="13" width="4" height="15" />
          <path d="M9 12L42 2V0h4v40h-4v-5l-12-3-1 4-13-2-1-5-6-1z" />
        </svg>
        <Marquee>
          <MarqueeItem $ml={-17}>金红包&gt;</MarqueeItem>
          <MarqueeItem $ml={278}>学多多钱多多！分享知识，</MarqueeItem>
        </Marquee>
        <NoticeRule />
        <svg width="34" height="34" fill="none" stroke="#de5a14" strokeWidth="3">
          <path d="M1.500 1.500l31 31M32.500 1.500l-31 31" />
        </svg>
      </Notice>

      <Tabs $line={2} $cols="180px 180px 180px 180px 180px 1fr" $pl={45} style={{ height: 106 }}>
        <Tab $active $bar={15}>股吧</Tab>
        <Tab>资讯</Tab>
        <Tab>公告</Tab>
        <Tab>资金</Tab>
        <Tab>持仓</Tab>
        <Tab>资料</Tab>
      </Tabs>

      <Cards>
        <Card $bg="linear-gradient(90deg, #fff5f3 236px, #fef0ee 236px)">
          <CardIcon><path d="M16 12h12v14H16z" fill="#fff" /></CardIcon>
          <CardTitle>ETF人气榜</CardTitle>
          <CardArrow>&gt;</CardArrow>
        </Card>
        <Card>
          <CardIcon />
          <CardTitle>ETF专区</CardTitle>
          <CardArrow>&gt;</CardArrow>
          <CardBlock />
        </Card>
        <Card>
          <CardIcon><path d="M21.500 9l12 10H9.500z" fill="#fff" /></CardIcon>
          <CardTitle>ETF</CardTitle>
        </Card>
      </Cards>

      <Toolbar>
        <IndexBox>
          <Triangle $up $w={11} $h={8} $color="#777" />
          <IndexValue>2595.47</IndexValue>
          <IndexLine>
            <Text $color={GREY} $size={35.500}>创业</Text>
            -0.47%
          </IndexLine>
        </IndexBox>
        {TOOLS.map(([name, icon]) => (
          <ToolItem key={name}>
            {icon}
            {name}
          </ToolItem>
        ))}
      </Toolbar>

      <SystemNav>
        <svg width="38" height="38" fill="none" stroke="#777" strokeWidth="2.500" strokeLinejoin="round">
          <path d="M32 2.500q3-2 3 2v29q0 4-3 2L4 21q-3-2 0-4z" />
        </svg>
        <svg width="38" height="38" fill="none" stroke="#777" strokeWidth="2.500">
          <rect x="2" y="2" width="34" height="34" rx="7" />
        </svg>
        <svg width="38" height="38" stroke="#777" strokeWidth="3">
          <path d="M1 3h36M1 19h36M1 35h36" />
        </svg>
      </SystemNav>
    </Screen>
  );
}
